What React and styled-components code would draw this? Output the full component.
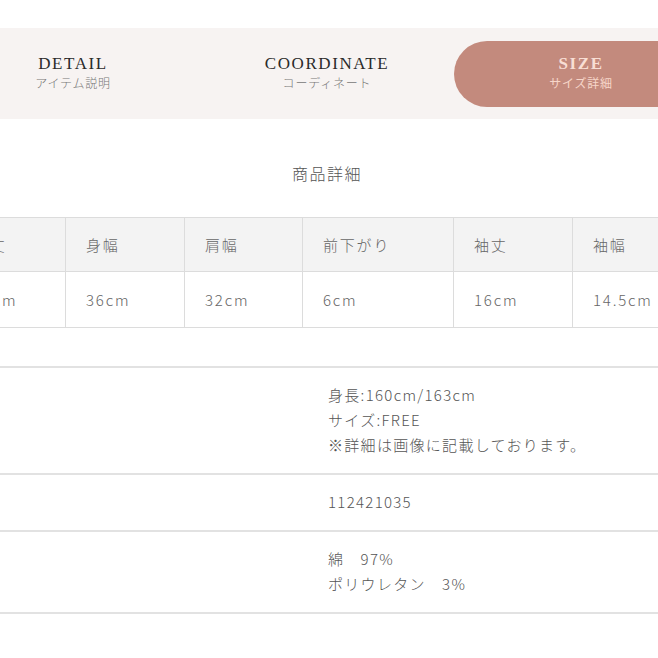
import React from 'react';
import styled, { createGlobalStyle } from 'styled-components';

const GlobalStyle = createGlobalStyle`
    body {
        margin: 0;
        background: #fff;
        overflow: hidden;
        font-family: "Noto Sans CJK JP", "Noto Sans", sans-serif;
    }
`;

const tabs = [
    { en: 'DETAIL', ja: 'アイテム説明' },
    { en: 'COORDINATE', ja: 'コーディネート' },
    { en: 'SIZE', ja: 'サイズ詳細', active: true },
];

const sizes = [
    { label: '着丈', value: '52cm' },
    { label: '身幅', value: '36cm' },
    { label: '肩幅', value: '32cm' },
    { label: '前下がり', value: '6cm' },
    { label: '袖丈', value: '16cm' },
    { label: '袖幅', value: '14.5cm' },
];

const colWidths = [113, 119, 118, 151, 119, 130];

const info = [
    ['身長:160cm/163cm', 'サイズ:FREE', '※詳細は画像に記載しております。'],
    ['112421035'],
    ['綿　97%', 'ポリウレタン　3%'],
];

function App() {
    return (
        <Page>
            <GlobalStyle />
            <TabBar>
                {tabs.map(tab => (
                    <Tab key={tab.en} active={tab.active}>
                        <TabTitle active={tab.active}>{tab.en}</TabTitle>
                        <TabSub active={tab.active}>{tab.ja}</TabSub>
                    </Tab>
                ))}
            </TabBar>
            <Heading>商品詳細</Heading>
            <SizeTable>
                <colgroup>
                    {colWidths.map((w, i) => <col key={i} style={{ width: w }} />)}
                </colgroup>
                <thead>
                    <tr>
                        {sizes.map(s => <th key={s.label}>{s.label}</th>)}
                    </tr>
                </thead>
                <tbody>
                    <tr>
                        {sizes.map(s => <td key={s.label}>{s.value}</td>)}
                    </tr>
                </tbody>
            </SizeTable>
            <InfoList>
                {info.map((lines, i) => (
                    <InfoRow key={i}>
                        <div />
                        <InfoValue>
                            {lines.map(line => <div key={line}>{line}</div>)}
                        </InfoValue>
                    </InfoRow>
                ))}
            </InfoList>
        </Page>
    );
}

export default App;

const Page = styled.div`
    width: 762px;
    margin-left: -54px;
`;

const TabBar = styled.div`
    margin-top: 28px;
    background: #f7f3f2;
    padding: 13px 0 12px;
    display: grid;
    grid-template-columns: repeat(3, 1fr);
`;

const Tab = styled.div`
    height: 66px;
    border-radius: 33px;
    background: ${p => (p.active ? '#c38a7d' : 'transparent')};
    display: flex;
    flex-direction: column;
    align-items: center;
    justify-content: center;
    padding-bottom: 2px;
    box-sizing: border-box;
`;

const TabTitle = styled.div`
    font-family: "Liberation Serif", "DejaVu Serif", serif;
    font-size: 17px;
    line-height: 20px;
    letter-spacing: 1.6px;
    font-weight: ${p => (p.active ? 700 : 400)};
    color: ${p => (p.active ? '#f8ded4' : '#2a2a2a')};
`;

const TabSub = styled.div`
    font-size: 12px;
    line-height: 18px;
    letter-spacing: 0.8px;
    font-weight: ${p => (p.active ? 400 : 300)};
    color: ${p => (p.active ? '#f7d6c9' : '#777')};
`;

const Heading = styled.h2`
    margin: 42px 0 32px;
    text-align: center;
    font-size: 16px;
    line-height: 24px;
    font-weight: 300;
    letter-spacing: 1.5px;
    color: #555;
`;

const SizeTable = styled.table`
    width: 750px;
    margin: 0 6px;
    border-collapse: collapse;
    table-layout: fixed;
    th, td {
        border: 1px solid #dcdcdc;
        padding: 0 20px;
        text-align: left;
        font-size: 15px;
        font-weight: 300;
        letter-spacing: 1.8px;
        color: #666;
        white-space: nowrap;
    }
    th {
        height: 53px;
        background: #f3f3f3;
    }
    td {
        height: 55px;
        background: #fff;
    }
`;

const InfoList = styled.div`
    margin-top: 38px;
    border-bottom: 2px solid #e2e2e2;
`;

const InfoRow = styled.div`
    display: grid;
    grid-template-columns: 382px 1fr;
    border-top: 2px solid #e2e2e2;
`;

const InfoValue = styled.div`
    padding: 14px 0 16px;
    font-size: 15px;
    line-height: 25px;
    letter-spacing: 1.3px;
    font-weight: 300;
    color: #555;
    white-space: pre;
`;
